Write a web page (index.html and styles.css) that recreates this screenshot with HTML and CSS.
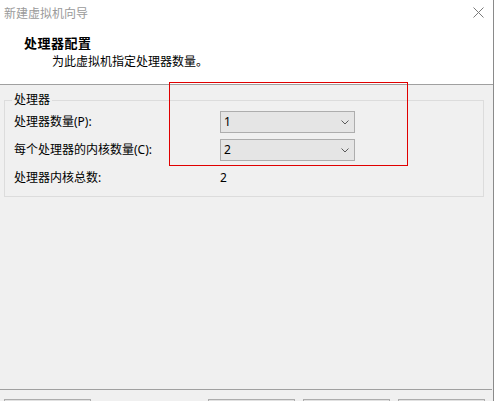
FILE: index.html
```html
<!DOCTYPE html>
<html lang="zh-CN">
<head>
<meta charset="utf-8">
<title>新建虚拟机向导</title>
<link rel="stylesheet" href="styles.css">
</head>
<body>
<div class="window">
  <div class="titlebar">
    <span class="title">新建虚拟机向导</span>
    <svg class="close" width="11" height="11" viewBox="0 0 11 11"><path d="M0.5 0.5L10.5 10.5M10.5 0.5L0.5 10.5" stroke="#7a7a7a" stroke-width="1" fill="none"/></svg>
  </div>
  <div class="header">
    <div class="h-title">处理器配置</div>
    <div class="h-sub">为此虚拟机指定处理器数量。</div>
  </div>
  <div class="content">
    <div class="group">
      <div class="legend">处理器</div>
      <div class="rows">
        <div class="label">处理器数量(P):</div>
        <div class="combo"><span>1</span><svg width="8" height="5" viewBox="0 0 8 5"><path d="M0.5 0.5L4 4L7.5 0.5" stroke="#5a5a5a" fill="none"/></svg></div>
        <div class="label">每个处理器的内核数量(C):</div>
        <div class="combo"><span>2</span><svg width="8" height="5" viewBox="0 0 8 5"><path d="M0.5 0.5L4 4L7.5 0.5" stroke="#5a5a5a" fill="none"/></svg></div>
        <div class="label">处理器内核总数:</div>
        <div class="value">2</div>
      </div>
    </div>
  </div>
  <div class="footer">
    <div class="btn btn-help"></div>
    <div class="spacer"></div>
    <div class="btn"></div>
    <div class="btn"></div>
    <div class="btn"></div>
  </div>
  <div class="annotation"></div>
</div>
</body>
</html>
```

FILE: styles.css
```css
html, body {
  margin: 0;
  padding: 0;
}
body {
  width: 494px;
  height: 401px;
  overflow: hidden;
  font-family: "Noto Sans", "Noto Sans CJK SC", sans-serif;
  font-size: 12px;
  color: #000;
}
.window {
  position: relative;
  width: 494px;
  height: 401px;
  box-sizing: border-box;
  border-right: 1px solid #8a8a8a;
  display: flex;
  flex-direction: column;
  background: #f0f0f0;
  overflow: hidden;
}
.titlebar {
  height: 25px;
  flex: none;
  background: #fff;
  display: flex;
  align-items: center;
  justify-content: space-between;
  padding: 0 9px 0 4px;
}
.title {
  color: #9a9a9a;
  font-family: "Noto Sans CJK SC", sans-serif;
  font-size: 12px;
  line-height: 16px;
}
.close {
  display: block;
  margin-top: -1px;
}
.header {
  flex: none;
  height: 59px;
  background: #fff;
  border-bottom: 1px solid #a0a0a0;
}
.h-title {
  font-family: "Noto Sans CJK SC", sans-serif;
  font-weight: bold;
  font-size: 13px;
  line-height: 16px;
  margin: 10px 0 0 24px;
  letter-spacing: 0.5px;
}
.h-sub {
  font-family: "Noto Sans CJK SC", sans-serif;
  font-size: 12px;
  line-height: 16px;
  margin: 2px 0 0 52px;
}
.content {
  flex: 1;
  padding: 15px 0 0 4px;
}
.group {
  width: 480px;
  box-sizing: border-box;
  border: 1px solid #dcdcdc;
  padding: 0 0 7px 9px;
}
.legend {
  width: max-content;
  margin: -9px 0 0 -2px;
  padding: 0 2px;
  background: #f0f0f0;
  line-height: 16px;
  height: 16px;
}
.rows {
  margin-top: 3px;
  display: grid;
  grid-template-columns: 206px 135px;
  grid-auto-rows: 22px;
  row-gap: 6px;
  align-items: center;
}
.label {
  line-height: 16px;
}
.combo {
  height: 22px;
  box-sizing: border-box;
  border: 1px solid #adadad;
  background: #e5e5e5;
  display: flex;
  align-items: center;
  justify-content: space-between;
  padding: 0 5px 0 3px;
  line-height: 16px;
}
.combo svg {
  display: block;
}
.value {
  line-height: 16px;
}
.footer {
  flex: none;
  height: 12px;
  box-sizing: border-box;
  border-top: 1px solid #a0a0a0;
  margin-right: 1px;
  display: flex;
  align-items: flex-start;
  padding: 9px 7px 0 4px;
  overflow: hidden;
}
.btn {
  flex: none;
  width: 87px;
  height: 23px;
  box-sizing: border-box;
  border: 1px solid #adadad;
  background: #e1e1e1;
  margin-left: 8px;
}
.btn-help {
  margin-left: 0;
}
.spacer {
  flex: 1;
}
.annotation {
  position: absolute;
  left: 169px;
  top: 82px;
  width: 239px;
  height: 84px;
  box-sizing: border-box;
  border: 1px solid #e00000;
}
```
